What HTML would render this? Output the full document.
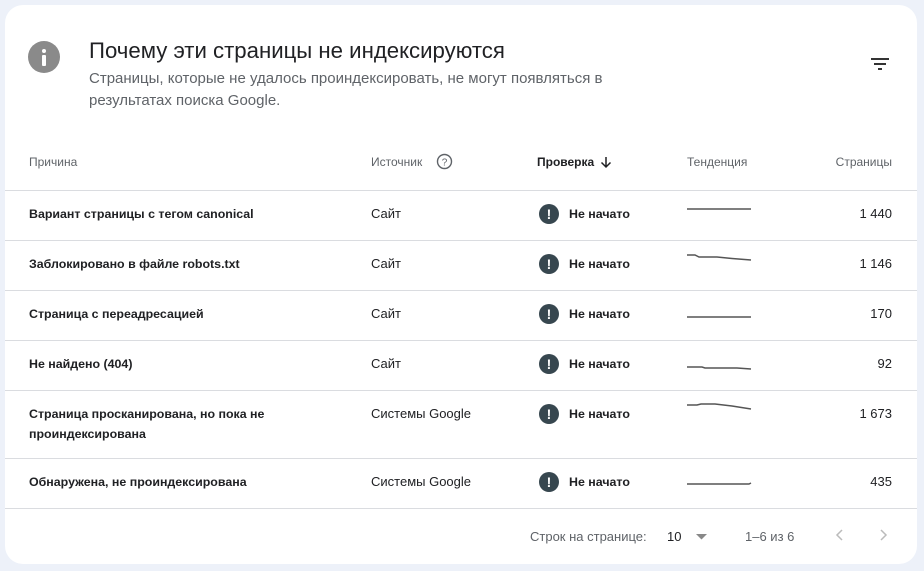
<!DOCTYPE html>
<html><head><meta charset="utf-8"><style>
*{margin:0;padding:0;box-sizing:border-box}
body{width:924px;height:571px;background:#edf1f9;font-family:"Liberation Sans",Roboto,sans-serif;position:relative;overflow:hidden}
.card{position:absolute;left:5px;top:5px;width:912px;height:559px;background:#fff;border-radius:18px;overflow:hidden}
.a{position:absolute;white-space:nowrap}
.hr{position:absolute;left:0;width:912px;height:1px;background:#dadce0}
.h{font-size:12px;color:#5f6368}
.c{font-size:13px;color:#202124}
.b{font-weight:bold;font-size:12.4px;margin-top:1px}
.ex{position:absolute;width:20px;height:20px;border-radius:50%;background:#37474f;color:#fff;font-size:14px;font-weight:bold;text-align:center;line-height:20px}
</style></head><body>
<div class="card">
<div class="a" style="left:23px;top:36px;width:32px;height:32px;border-radius:50%;background:#8a8a8a">
 <div style="position:absolute;left:14px;top:8px;width:4px;height:4px;border-radius:2px;background:#fff"></div>
 <div style="position:absolute;left:14px;top:14px;width:4px;height:11px;border-radius:1px;background:#fff"></div>
</div>
<div class="a" style="left:84px;top:33px;font-size:22.2px;color:#202124">Почему эти страницы не индексируются</div>
<div class="a" style="left:84px;top:63px;font-size:15px;color:#5f6368;line-height:22px">Страницы, которые не удалось проиндексировать, не могут появляться в<br>результатах поиска Google.</div>
<svg class="a" style="left:865px;top:47px" width="20" height="20"><rect x="1" y="6" width="18" height="2" fill="#333"/><rect x="4" y="11" width="12" height="2" fill="#333"/><rect x="8" y="16" width="4" height="2" fill="#333"/></svg>

<div class="a h" style="left:24px;top:150px">Причина</div>
<div class="a h" style="left:366px;top:150px">Источник</div>
<svg class="a" style="left:431px;top:148px" width="17" height="17"><circle cx="8.5" cy="8.5" r="7" fill="none" stroke="#5f6368" stroke-width="1.4"/><text x="8.5" y="12.5" font-size="10" text-anchor="middle" fill="#5f6368" font-family="Liberation Sans">?</text></svg>
<div class="a h" style="left:532px;top:150px;color:#202124;font-weight:bold">Проверка</div>
<svg class="a" style="left:594px;top:150px" width="14" height="14"><path d="M7 2v10M2.5 7.5L7 12l4.5-4.5" fill="none" stroke="#202124" stroke-width="1.5"/></svg>
<div class="a h" style="left:682px;top:150px">Тенденция</div>
<div class="a h" style="right:25px;top:150px">Страницы</div>

<div class="hr" style="top:185px"></div>
<div class="hr" style="top:235px"></div>
<div class="hr" style="top:285px"></div>
<div class="hr" style="top:335px"></div>
<div class="hr" style="top:385px"></div>
<div class="hr" style="top:453px"></div>
<div class="hr" style="top:503px"></div>

<div class="a c b" style="left:24px;top:201px">Вариант страницы с тегом canonical</div>
<div class="a c" style="left:366px;top:201px">Сайт</div>
<div class="ex" style="left:534px;top:199px">!</div><div class="a c b" style="left:564px;top:201px">Не начато</div>
<svg class="a" style="left:682px;top:198px" width="66" height="12"><path d="M0 6H64" stroke="#555" stroke-width="1.5" fill="none"/></svg>
<div class="a c" style="right:25px;top:201px">1 440</div>

<div class="a c b" style="left:24px;top:251px">Заблокировано в файле robots.txt</div>
<div class="a c" style="left:366px;top:251px">Сайт</div>
<div class="ex" style="left:534px;top:249px">!</div><div class="a c b" style="left:564px;top:251px">Не начато</div>
<svg class="a" style="left:682px;top:248px" width="66" height="14"><path d="M0 2H8L12 4H30L45 5.5L64 7" stroke="#555" stroke-width="1.5" fill="none"/></svg>
<div class="a c" style="right:25px;top:251px">1 146</div>

<div class="a c b" style="left:24px;top:301px">Страница с переадресацией</div>
<div class="a c" style="left:366px;top:301px">Сайт</div>
<div class="ex" style="left:534px;top:299px">!</div><div class="a c b" style="left:564px;top:301px">Не начато</div>
<svg class="a" style="left:682px;top:300px" width="66" height="14"><path d="M0 12H64" stroke="#555" stroke-width="1.5" fill="none"/></svg>
<div class="a c" style="right:25px;top:301px">170</div>

<div class="a c b" style="left:24px;top:351px">Не найдено (404)</div>
<div class="a c" style="left:366px;top:351px">Сайт</div>
<div class="ex" style="left:534px;top:349px">!</div><div class="a c b" style="left:564px;top:351px">Не начато</div>
<svg class="a" style="left:682px;top:356px" width="66" height="12"><path d="M0 6H15L18 7H50L64 8" stroke="#555" stroke-width="1.5" fill="none"/></svg>
<div class="a c" style="right:25px;top:351px">92</div>

<div class="a c b" style="left:24px;line-height:20px;top:398px">Страница просканирована, но пока не<br>проиндексирована</div>
<div class="a c" style="left:366px;top:401px">Системы Google</div>
<div class="ex" style="left:534px;top:399px">!</div><div class="a c b" style="left:564px;top:401px">Не начато</div>
<svg class="a" style="left:682px;top:396px" width="66" height="12"><path d="M0 4H10L14 3H28L45 5L64 8" stroke="#555" stroke-width="1.5" fill="none"/></svg>
<div class="a c" style="right:25px;top:401px">1 673</div>

<div class="a c b" style="left:24px;top:469px">Обнаружена, не проиндексирована</div>
<div class="a c" style="left:366px;top:469px">Системы Google</div>
<div class="ex" style="left:534px;top:467px">!</div><div class="a c b" style="left:564px;top:469px">Не начато</div>
<svg class="a" style="left:682px;top:472px" width="66" height="12"><path d="M0 7H62L64 6" stroke="#555" stroke-width="1.5" fill="none"/></svg>
<div class="a c" style="right:25px;top:469px">435</div>

<div class="a h" style="left:525px;top:524px;font-size:13px">Строк на странице:</div>
<div class="a c" style="left:662px;top:524px">10</div>
<svg class="a" style="left:690px;top:528px" width="14" height="8"><path d="M1 1h11L6.5 6.5z" fill="#888"/></svg>
<div class="a h" style="left:740px;top:524px;font-size:13px">1–6 из 6</div>
<svg class="a" style="left:828px;top:522px" width="14" height="16"><path d="M9 3L4 8l5 5" fill="none" stroke="#bbb" stroke-width="1.5"/></svg>
<svg class="a" style="left:871px;top:522px" width="14" height="16"><path d="M5 3l5 5-5 5" fill="none" stroke="#bbb" stroke-width="1.5"/></svg>
</div>
</body></html>
